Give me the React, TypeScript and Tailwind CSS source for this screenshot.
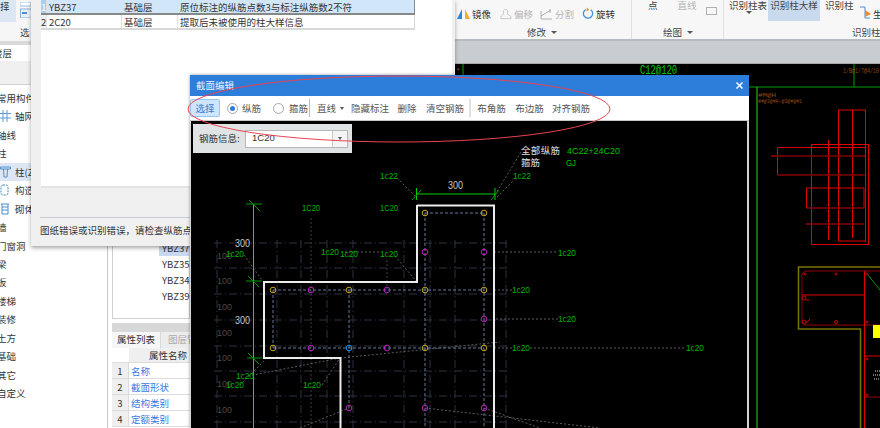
import React from "react";

const cjk = '"Noto Sans CJK SC", "Noto Sans", sans-serif';

const navRows = [
  { t: "常用构件" },
  { t: "轴网", icon: "grid" },
  { t: "轴线" },
  { t: "柱" },
  { t: "柱(Z)", icon: "col", sel: true },
  { t: "构造", icon: "gz" },
  { t: "砌体", icon: "wall" },
  { t: "墙" },
  { t: "门窗洞" },
  { t: "梁" },
  { t: "板" },
  { t: "楼梯" },
  { t: "装修" },
  { t: "土方" },
  { t: "基础" },
  { t: "其它" },
  { t: "自定义" },
];

function NavIcon({ kind }: { kind: string }) {
  if (kind === "grid")
    return (
      <svg width="11" height="12" viewBox="0 0 11 12" className="absolute left-0 top-[3px]" fill="none" stroke="#5a9ad8">
        <path d="M3 0V12M7 0V12M0 3.5H11M0 8H11" />
      </svg>
    );
  if (kind === "col")
    return (
      <svg width="11" height="12" viewBox="0 0 11 12" className="absolute left-0 top-[3px]" fill="none" stroke="#4a90d0">
        <path d="M0.5 1H10.5V3H0.5ZM3.5 3L4 11H7L7.5 3" />
      </svg>
    );
  if (kind === "gz")
    return (
      <svg width="10" height="12" viewBox="0 0 10 12" className="absolute left-0 top-[3px]" fill="none" stroke="#3f86c8" strokeDasharray="2 1">
        <rect x="1" y="1" width="7" height="10" rx="2" />
      </svg>
    );
  return (
    <svg width="10" height="12" viewBox="0 0 10 12" className="absolute left-0 top-[3px]" fill="none" stroke="#4a90d0">
      <path d="M1 1H9M2 4H8M2 7H8M2 11H8M2 1V11M8 1V11" />
    </svg>
  );
}

function LeftPanel() {
  return (
    <div className="w-[108px] h-full shrink-0 bg-white flex flex-col border-r border-[#c8c8c8]">
      <div className="h-[41px] bg-[#f6f6f6] relative overflow-hidden">
        <div className="w-[16px] h-[22px] bg-[#dde7f3] text-[9.5px] leading-[12px] text-[#333] overflow-hidden">
          择
        </div>
        <svg width="11" height="16" viewBox="0 0 11 16" className="absolute left-[20px] top-[2px]">
          <rect x="0" y="0" width="11" height="4" fill="#fff" stroke="#9cc3e8" />
          <rect x="0.5" y="7" width="11" height="9" fill="#e8f0f8" stroke="#8ab0d4" />
          <rect x="2" y="10" width="5" height="2" fill="#4a90d0" />
        </svg>
        <div className="absolute left-[20px] top-[25px] text-[9.5px] leading-[14px] text-[#444]">选</div>
      </div>
      <div className="h-[4px] bg-[#d9d9d9]" />
      <div className="h-[16px] bg-white text-[9.5px] leading-[16px] text-[#333] -ml-[7px]">楼层</div>
      <div className="h-[24px] bg-[#f0f0f0] border-b border-[#d0d0d0]" />
      <div className="flex flex-col pt-[4px] text-[9.5px] text-[#333]">
        {navRows.map((r) => (
          <div key={r.t} className={`h-[18.45px] relative leading-[18px] ${r.sel ? "bg-[#dce6f4]" : ""}`}>
            {r.icon && <NavIcon kind={r.icon} />}
            <div className={r.icon ? "ml-[15px]" : "-ml-[3px]"}>{r.t}</div>
          </div>
        ))}
      </div>
    </div>
  );
}

function Item({ w, label, gray, children }: { w: string; label: string; gray?: boolean; children: React.ReactNode }) {
  return (
    <div className={`flex items-center shrink-0 whitespace-nowrap ${w} gap-[2px]`}>
      {children}
      <span className={gray ? "text-[#b5b5b5]" : "text-[#333]"}>{label}</span>
    </div>
  );
}

function Ribbon() {
  return (
    <div className="h-[41px] bg-[#f7f7f7] border-b-[2px] border-[#b8bbbf] flex justify-end text-[9.5px] leading-[14px] text-[#444]">
      <div className="w-[177px] border-r border-[#e0e0e0] flex flex-col relative h-[39px]">
        <div className="flex items-center h-[26px] w-full pl-[2px] pt-[1px]">
          <Item w="w-[43px]" label="镜像">
            <svg width="13" height="12" viewBox="0 0 13 12">
              <path d="M5 1L5 11H0Z" fill="#2d86d8" />
              <path d="M8 1L8 11H13Z" fill="#f0b030" />
            </svg>
          </Item>
          <Item w="w-[40px]" label="偏移" gray>
            <svg width="12" height="12" viewBox="0 0 13 12" fill="none" stroke="#c4c4c4">
              <path d="M1 11H12V9C10 7 9 7 8 6C9 3 8 1 6 1C4 1 3 3 4 6C3 7 2 7 1 9Z" />
            </svg>
          </Item>
          <Item w="w-[42px]" label="分割" gray>
            <svg width="13" height="12" viewBox="0 0 13 12" fill="none" stroke="#b0b0b0">
              <path d="M1 3V11H12M1 8L11 2M10 1V5" />
            </svg>
          </Item>
          <Item w="w-[35px]" label="旋转">
            <svg width="12" height="13" viewBox="0 0 13 13" fill="none">
              <path d="M4 2.2A5 5 0 1 0 9.5 2.5" stroke="#3c90dc" strokeWidth="1.4" />
              <path d="M5 0L8 2.5L5 4Z" fill="#e89030" />
            </svg>
          </Item>
        </div>
        <div className="flex items-center gap-[5px] mt-[-1px] ml-[72px]">
          <span>修改</span>
          <span className="w-0 h-0 border-x-[3px] border-x-transparent border-t-[3px] border-t-[#555]" />
        </div>
      </div>
      <div className="w-[92px] border-r border-[#e0e0e0] relative h-[39px]">
        <div className="flex -mt-[2px] pl-[16px] gap-[20px] h-[26px]">
          <span>点</span>
          <div className="flex flex-col">
            <span className="text-[#b5b5b5]">直线</span>
            <svg width="13" height="10" viewBox="0 0 13 10" className="ml-[27px] -mt-[6px]" fill="none" stroke="#b0b0b0">
              <rect x="1.5" y="1.5" width="10" height="7" />
            </svg>
          </div>
        </div>
        <div className="flex items-center gap-[5px] pl-[31px] mt-[1px]">
          <span>绘图</span>
          <span className="w-0 h-0 border-x-[3px] border-x-transparent border-t-[3px] border-t-[#555]" />
        </div>
      </div>
      <div className="w-[156px] h-[39px] flex flex-col overflow-hidden">
        <div className="flex h-[22px]">
          <div className="w-[44px] pl-[5px] -mt-[2px] flex flex-col">
            <span className="whitespace-nowrap">识别柱表</span>
            <span className="w-0 h-0 ml-[17px] mt-[-1px] border-x-[3px] border-x-transparent border-t-[3px] border-t-[#555]" />
          </div>
          <div className="w-[52px] bg-[#c9d9ee] text-center leading-[10px] whitespace-nowrap">识别柱大样</div>
          <div className="w-[39px] pl-[5px] leading-[10px] whitespace-nowrap">识别柱</div>
          <div className="relative">
            <svg width="12" height="13" viewBox="0 0 12 13" className="absolute left-0 top-[6px]">
              <path d="M1 1H6V12H11" fill="none" stroke="#4a90d0" />
              <path d="M6 4L12 8L6 11Z" fill="#e89030" />
            </svg>
            <span className="absolute left-[14px] top-[7px] text-[#333]">生</span>
          </div>
        </div>
        <div className="pl-[128px] mt-[4px] whitespace-nowrap">识别柱</div>
      </div>
    </div>
  );
}

function PropertyPanel() {
  const rows = ["名称", "截面形状", "结构类别", "定额类别"];
  return (
    <div className="w-[82px] h-full shrink-0 bg-white pl-[4px] flex flex-col text-[9.5px] text-[#333] overflow-hidden">
      <div className="h-[255px] shrink-0 border border-[#d0d0d0] border-t-0 pt-[176px] pl-[46px] flex flex-col whitespace-nowrap">
        <div className="h-[16px] bg-[#c7d8f0] leading-[16px] pl-[3px]">YBZ37</div>
        <div className="h-[16px] leading-[16px] pl-[3px]">YBZ35</div>
        <div className="h-[16px] leading-[16px] pl-[3px]">YBZ34</div>
        <div className="h-[16px] leading-[16px] pl-[3px]">YBZ39</div>
      </div>
      <div className="h-[4px] shrink-0" />
      <div className="h-[9px] shrink-0 bg-[#d8d8d8]" />
      <div className="h-[16px] shrink-0 flex bg-[#ececec] leading-[15px] whitespace-nowrap">
        <div className="w-[49px] bg-[#f6f6f6] text-center shrink-0 border-r border-[#d8d8d8]">属性列表</div>
        <div className="pl-[7px] text-[#aaa]">图层管理</div>
      </div>
      <div className="h-[15px] shrink-0 flex border-b border-[#dcdcdc] leading-[15px]">
        <div className="w-[17px] shrink-0 bg-white" />
        <div className="flex-1 bg-[#efefef] pl-[20px] whitespace-nowrap">属性名称</div>
      </div>
      {rows.map((r, i) => (
        <div key={r} className="h-[16px] shrink-0 flex border-b border-[#dcdcdc] leading-[16px]">
          <div className="w-[17px] shrink-0 bg-[#efefef] text-center border-r border-[#dcdcdc]">{i + 1}</div>
          <div className="pl-[2px] text-[#3a78e0] whitespace-nowrap">{r}</div>
        </div>
      ))}
    </div>
  );
}

function BackDrawing() {
  return (
    <svg className="w-full h-full block" viewBox="190 64 690 364" fill="none">
      <text x="640" y="74" fontSize="12" textLength="37" lengthAdjust="spacingAndGlyphs" fill="#00d000" fontFamily="Liberation Mono, monospace">C12@120</text>
      <path d="M463 64V75" stroke="#00a000" />
      <text x="456" y="73" fontSize="7" fill="#a05a10" fontFamily="Liberation Mono, monospace">*</text>
      <path d="M748 87H880M854 64V87" stroke="#006a00" strokeWidth="1.5" />
      <path d="M757 87V428" stroke="#22d822" />
      <text x="843" y="73" fontSize="7" textLength="36" lengthAdjust="spacingAndGlyphs" fill="#8a4a10" fontFamily="Liberation Mono, monospace">1/B@1/7@4/10</text>
      <text x="758" y="97" fontSize="6" textLength="18" lengthAdjust="spacingAndGlyphs" fill="#8a4a10" fontFamily="Liberation Mono, monospace">#M@H</text>
      <text x="758" y="103" fontSize="6" textLength="44" lengthAdjust="spacingAndGlyphs" fill="#8a4a10" fontFamily="Liberation Mono, monospace">##@3@#H-@3@#@#1</text>
      <g stroke="#e00000">
        <path d="M838.5 110H865.5V242M838.5 110V241H866M852.5 110V238M828.5 140V240" />
        <rect x="811.5" y="144.5" width="57" height="100" />
        <path d="M865 147.5H777.5V175M771 156H775M806.5 208V188H864V208" />
        <path d="M863 156H865M806 224H810" />
      </g>
      <g stroke="#800000" strokeWidth="1.5">
        <path d="M772 156H865M777 175H865M806 208H864M806 224H864" />
      </g>
      <g stroke="#7a7400" strokeWidth="1.5">
        <path d="M880 267H798.5V329H860.5V428" />
      </g>
      <g stroke="#900000">
        <path d="M880 271H805L802 274V322L805 325H880" />
        <path d="M865 397H880" />
      </g>
      <g stroke="#e00000">
        <path d="M802 295H865M864.5 271V428M865 356H880" />
      </g>
      <g stroke="#d00000" fill="none">
        <circle cx="804" cy="298" r="2" />
        <circle cx="804" cy="322" r="2" />
        <path d="M806 300H809M806 323L810 319" />
        <circle cx="836" cy="322" r="1.5" />
        <circle cx="836" cy="274" r="1" />
        <circle cx="805" cy="274" r="1" />
        <circle cx="867" cy="274" r="1" />
        <circle cx="867" cy="322" r="1" />
        <circle cx="867" cy="359" r="1" />
        <circle cx="867" cy="395" r="1" />
      </g>
      <path d="M868 275L880 290" stroke="#0a8a0a" />
      <rect x="873" y="325" width="7" height="13" fill="#ffff00" />
      <path d="M873 375H880M875 371H880M874 379H880" stroke="#d8d8d8" strokeDasharray="1 1" />
    </svg>
  );
}

const hY = [243, 268, 294, 320, 346, 371, 396, 422];
const vX = [217, 277, 301, 327, 353, 404, 430, 455, 506];
const markers: [number, number, string][] = [
  [425, 213, "#c8a820"], [484, 213, "#c8a820"], [425, 252, "#c020c0"], [484, 252, "#c020c0"],
  [273, 290, "#c8a820"], [311, 290, "#c020c0"], [349, 290, "#c8a820"], [387, 290, "#c020c0"], [425, 290, "#c8a820"], [484, 290, "#c8a820"],
  [484, 319, "#c020c0"],
  [273, 348, "#c8a820"], [311, 348, "#c020c0"], [349, 348, "#2090e0"], [387, 348, "#c020c0"], [425, 348, "#c8a820"], [484, 348, "#c8a820"],
  [349, 408, "#c020c0"], [425, 408, "#c020c0"], [484, 408, "#c020c0"],
];
const labels: [number, number, string][] = [
  [380, 179, "1c22"], [513, 179, "1c22"], [302, 211, "1C20"], [380, 211, "1C20"],
  [226, 257, "1c20"], [321, 255, "1c20"], [340, 257, "1c20"], [380, 257, "1c20"], [558, 256, "1c20"],
  [512, 293, "1c20"], [558, 322, "1c20"], [512, 351, "1c20"], [686, 351, "1c20"],
  [236, 379, "1c20"], [226, 388, "1c20"], [303, 388, "1c20"],
];
const grays: [number, number][] = [[217, 259], [217, 284], [217, 310], [217, 336], [217, 361], [217, 387], [217, 413]];

function Drawing() {
  const mono = "Liberation Sans, sans-serif";
  return (
    <svg className="absolute inset-0 w-full h-full" viewBox="191 121 556 307" fill="none">
      <g stroke="#2c323e" strokeDasharray="8 3 1 3">
        {hY.map((y) => (
          <path key={y} d={`M214 ${y}H510`} />
        ))}
        {vX.map((x) => (
          <path key={x} d={`M${x} 240V428`} />
        ))}
      </g>
      <g stroke="#3c3c3c" strokeDasharray="2 2">
        <path d="M311 218V428M387 260V290" />
      </g>
      <g stroke="#5c5c5c" strokeDasharray="2 2">
        <path d="M494 252H558M496 319H558M494 290H512M494 348H512M530 348H686M345 252H380" />
        <path d="M397 178L416 197M497 197L513 181M495 195L521 152M395 256L416 281" />
        <path d="M248 376L340 358M240 385L265 360M322 385L340 358M340 358L500 342" />
        <path d="M300 428L349 408M425 408L600 428M484 408L540 428" />
        <path d="M244 255L262 280" />
      </g>
      <g stroke="#65799a" strokeDasharray="3 2">
        <path d="M425 213V428M484 213V428M425 213H484M273 290H484M273 348H484M273 290V348M349 290V408" />
      </g>
      {grays.map(([x, y]) => (
        <text key={y} x={x} y={y} fontSize="9" textLength="15" lengthAdjust="spacingAndGlyphs" fill="#4a4a4a" fontFamily={mono}>100</text>
      ))}
      <path d="M417 205.5H494V428M417 205V282H264V358H340.5V428" stroke="#ececec" strokeWidth="2" />
      <g stroke="#00d000">
        <path d="M253.5 204V428" stroke="#22d822" />
        <path d="M246 204H262M246 281H262M247 358H262" stroke="#009a00" />
        <path d="M249 200L260 211M248 276L259 287M248 353L259 364" stroke="#009a00" />
        <path d="M416 194H495M416.5 188V200M495 188V200" />
        <path d="M412 200L421 190M491 200L499 190" stroke="#009a00" />
      </g>
      {markers.map(([x, y, c], i) => (
        <g key={i} stroke={c}>
          <circle cx={x} cy={y} r="2.8" />
        </g>
      ))}
      {labels.map(([x, y, s], i) => (
        <text key={i} x={x} y={y} fontSize="9" textLength="18" lengthAdjust="spacingAndGlyphs" fill="#00b400" fontFamily={mono}>{s}</text>
      ))}
      <text x="448" y="189" fontSize="10" textLength="15" lengthAdjust="spacingAndGlyphs" fill="#c8c8c8" fontFamily={mono}>300</text>
      <text x="235" y="247" fontSize="10" textLength="15" lengthAdjust="spacingAndGlyphs" fill="#c8c8c8" fontFamily={mono}>300</text>
      <text x="235" y="324" fontSize="10" textLength="15" lengthAdjust="spacingAndGlyphs" fill="#c8c8c8" fontFamily={mono}>300</text>
      <text x="521" y="154" fontSize="9.5" textLength="39" fill="#e0e0e0" fontFamily={cjk}>全部纵筋</text>
      <text x="521" y="166" fontSize="9.5" fill="#e0e0e0" fontFamily={cjk}>箍筋</text>
      <text x="567" y="154" fontSize="9.5" textLength="53" lengthAdjust="spacingAndGlyphs" fill="#00c000" fontFamily={mono}>4C22+24C20</text>
      <text x="566" y="166" fontSize="9.5" textLength="10" lengthAdjust="spacingAndGlyphs" fill="#00c000" fontFamily={mono}>GJ</text>
    </svg>
  );
}

function Radio({ on }: { on?: boolean }) {
  return (
    <span className="w-[11px] h-[11px] rounded-full border border-[#a8a8a8] bg-white flex items-center justify-center shrink-0">
      {on && <span className="w-[5px] h-[5px] rounded-full bg-[#2d7ddb]" />}
    </span>
  );
}

function Modal() {
  return (
    <div className="absolute left-[190px] top-[75px] w-[559px] h-[353px] flex flex-col bg-[#d4d4d4] shadow-[0_0_3px_rgba(0,0,0,0.4)]" style={{ fontFamily: cjk }}>
      <div className="h-[21px] shrink-0 bg-[#2d7ddb] flex items-center justify-between pl-[6px] pr-[6px] text-[9.5px] text-white">
        <span className="opacity-90">截面编辑</span>
        <svg width="7" height="7" viewBox="0 0 7 7" stroke="#fff" strokeWidth="1.5">
          <path d="M0.5 0.5L6.5 6.5M6.5 0.5L0.5 6.5" />
        </svg>
      </div>
      <div className="h-[25px] shrink-0 bg-white border-b border-[#c8c8c8] flex items-center text-[9.5px] text-[#555] whitespace-nowrap">
        <div className="w-[30px] h-[18px] bg-[#cfe5fb] border border-[#94c6f5] rounded-[2px] text-center leading-[16px] text-[#3a78c8] shrink-0">选择</div>
        <div className="ml-[7px]"><Radio on /></div>
        <span className="ml-[4px] w-[20px]">纵筋</span>
        <div className="ml-[11px]"><Radio /></div>
        <span className="ml-[5px] w-[20px]">箍筋</span>
        <span className="w-px h-[18px] bg-[#bbb]" />
        <span className="ml-[7px] w-[20px]">直线</span>
        <span className="ml-[3px] w-0 h-0 border-x-[2.5px] border-x-transparent border-t-[3px] border-t-[#555]" />
        <span className="ml-[7px] w-[38px] text-center">隐藏标注</span>
        <span className="ml-[8px] w-[20px] text-center">删除</span>
        <span className="ml-[9px] w-[38px] text-center">清空钢筋</span>
        <span className="w-[2px] h-[18px] bg-[#e0e0e0] ml-[5px]" />
        <span className="ml-[6px] w-[29px] text-center">布角筋</span>
        <span className="ml-[9px] w-[29px] text-center">布边筋</span>
        <span className="ml-[8px] w-[38px] text-center">对齐钢筋</span>
      </div>
      <div className="flex-1 bg-black relative ml-[1px] mr-[2px] overflow-hidden">
        <Drawing />
        <div className="relative mt-[3px] ml-[2px] w-[159px] h-[29px] bg-[#dfe3e3] flex items-center pl-[6px] text-[9.5px] text-[#333]">
          <span className="w-[46px] shrink-0">钢筋信息:</span>
          <div className="w-[103px] h-[18px] bg-white border border-[#b8b8b8] flex items-center pl-[6px] justify-between">
            <span style={{ fontFamily: '"Liberation Sans", sans-serif' }}>1C20</span>
            <span className="w-[15px] h-full border-l border-[#c8c8c8] bg-[#f4f4f4] flex items-center justify-center">
              <span className="w-0 h-0 border-x-[2.5px] border-x-transparent border-t-[3px] border-t-[#555]" />
            </span>
          </div>
        </div>
      </div>
    </div>
  );
}

function ErrorDialog() {
  const cols = ["w-[75px]", "w-[56px]", "w-[238px]"];
  const rows = [
    { n: "1", c: ["YBZ37", "基础层", "原位标注的纵筋点数3与标注纵筋数2不符"], sel: true },
    { n: "2", c: ["2C20", "基础层", "提取后未被使用的柱大样信息"] },
  ];
  return (
    <div className="absolute left-[31px] top-0 w-[424px] h-[246px] bg-[#f0f0f0] shadow-[0_2px_4px_rgba(0,0,0,0.35)] flex flex-col" style={{ fontFamily: cjk }}>
      <div className="h-[188px] shrink-0 ml-[10px] mr-[3px] bg-white border-b-[2px] border-[#e4e4e4] text-[9.5px] text-[#333]">
        {rows.map((r) => (
          <div key={r.n} className={`flex h-[15px] leading-[14px] w-[374px] whitespace-nowrap border-r ${r.sel ? "bg-[#d2e6fa] border-b-[2px] border-[#888]" : "border-b-[2px] border-[#d8d8d8]"}`}>
            <div className={`w-[5px] shrink-0 ${r.sel ? "bg-[#a6d0f5] text-white" : "bg-[#f0f0f0]"}`}>{r.n}</div>
            {r.c.map((t, i) => (
              <div key={i} className={`${cols[i]} shrink-0 pl-[2px] border-l border-[#e0e0e0]`}>{t}</div>
            ))}
          </div>
        ))}
      </div>
      <div className="mx-[9px] mt-[29px] border-t border-[#c8ccd4] pt-[5px] text-[9.5px] leading-[14px] text-[#333] whitespace-nowrap overflow-hidden">
        图纸错误或识别错误，请检查纵筋点数或重新识别
      </div>
    </div>
  );
}

export default function App() {
  return (
    <div className="relative w-[880px] h-[428px] overflow-hidden bg-black flex" style={{ fontFamily: cjk }}>
      <LeftPanel />
      <div className="flex-1 flex flex-col min-w-0">
        <Ribbon />
        <div className="h-[23px] shrink-0 bg-[#c9ccd0] border-b border-[#a8a8a8]" />
        <div className="flex-1 flex min-h-0 bg-black">
          <PropertyPanel />
          <div className="flex-1 min-w-0">
            <BackDrawing />
          </div>
        </div>
      </div>
      <ErrorDialog />
      <Modal />
      <svg className="absolute inset-0 w-[880px] h-[428px] pointer-events-none" viewBox="0 0 880 428" fill="none">
        <ellipse cx="399" cy="109" rx="211" ry="33" stroke="#e84450" strokeWidth="1" />
      </svg>
    </div>
  );
}
